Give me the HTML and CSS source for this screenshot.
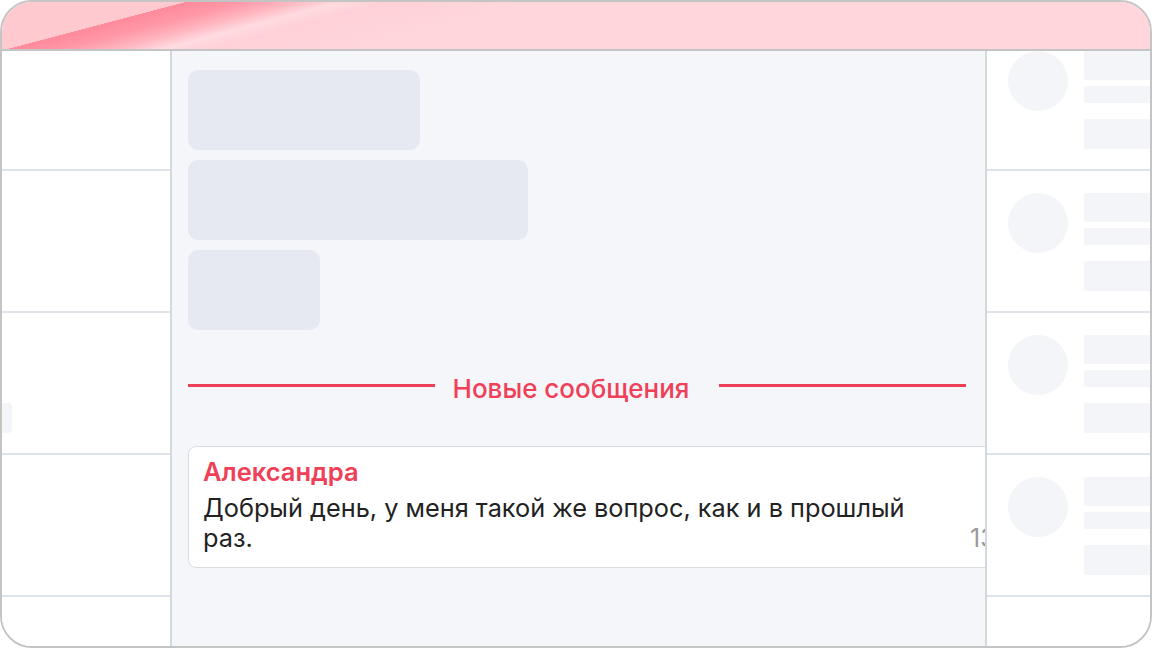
FILE: index.html
```html
<!DOCTYPE html>
<html lang="ru">
<head>
<meta charset="utf-8">
<title>Чат</title>
<link rel="stylesheet" href="styles.css">
</head>
<body>
<div class="frame">
  <div class="topbar"></div>
  <div class="columns">
    <aside class="side side-left">
      <div class="list">
        <div class="row"></div>
        <div class="row"></div>
        <div class="row"><div class="stub"></div></div>
        <div class="row"></div>
        <div class="row"></div>
      </div>
    </aside>
    <main class="chat">
      <div class="skeleton s1"></div>
      <div class="skeleton s2"></div>
      <div class="skeleton s3"></div>
      <div class="divider">
        <span class="divider-line"></span>
        <span class="divider-text">Новые сообщения</span>
        <span class="divider-line"></span>
      </div>
      <div class="message">
        <div class="message-body">
          <div class="message-author">Александра</div>
          <div class="message-text">Добрый день, у меня такой же вопрос, как и в прошлый раз.</div>
        </div>
        <div class="message-time">13:42</div>
      </div>
    </main>
    <aside class="side side-right">
      <div class="list">
        <div class="row item"><div class="avatar"></div><div class="bars"><div class="bar b1"></div><div class="bar b2"></div><div class="bar b3"></div></div></div>
        <div class="row item"><div class="avatar"></div><div class="bars"><div class="bar b1"></div><div class="bar b2"></div><div class="bar b3"></div></div></div>
        <div class="row item"><div class="avatar"></div><div class="bars"><div class="bar b1"></div><div class="bar b2"></div><div class="bar b3"></div></div></div>
        <div class="row item"><div class="avatar"></div><div class="bars"><div class="bar b1"></div><div class="bar b2"></div><div class="bar b3"></div></div></div>
        <div class="row item"></div>
      </div>
    </aside>
  </div>
</div>
</body>
</html>
```
FILE: styles.css
```css
* { box-sizing: border-box; }
html, body { margin: 0; padding: 0; background: #ffffff; }
body {
  width: 1152px;
  height: 648px;
  overflow: hidden;
  font-family: Inter, "Noto Sans", "DejaVu Sans", sans-serif;
}
.frame {
  width: 1152px;
  height: 648px;
  border: 2px solid #c4c4c4;
  border-radius: 32px;
  overflow: hidden;
  display: flex;
  flex-direction: column;
  background: #ffffff;
}
.topbar {
  flex: 0 0 49px;
  border-bottom: 2px solid #c4c4c4;
  background: linear-gradient(165.2deg,
    #ffc9d0 0%, #ffc9d0 13.8%,
    #ff8a9b 13.9%, #ff97a7 18%,
    #ffb6c0 22%, #ffdbe0 25.5%,
    #ffd1d7 29%, #ffd6db 40%, #ffd6db 100%);
}
.columns {
  flex: 1;
  display: flex;
  min-height: 0;
}
.side {
  background: #ffffff;
  overflow: hidden;
}
.side-left {
  flex: 0 0 170px;
  border-right: 2px solid #d0d9de;
}
.side-right {
  flex: 1;
  border-left: 2px solid #d0d9de;
}
.list {
  margin-top: -22px;
}
.row {
  display: flow-root;
  height: 142px;
  border-bottom: 2px solid #dde3e8;
}
.stub {
  margin-top: 90px;
  width: 10px;
  height: 30px;
  background: #f4f5f9;
  border-radius: 0 4px 4px 0;
}
.item {
  display: flex;
  gap: 16px;
  padding: 22px 0 0 21px;
}
.avatar {
  flex: 0 0 60px;
  height: 60px;
  border-radius: 50%;
  background: #f4f5f9;
}
.bars {
  flex: 0 0 160px;
  display: flex;
  flex-direction: column;
}
.bar {
  background: #f4f5f9;
  border-radius: 3px;
}
.b1 { height: 29px; }
.b2 { height: 17px; margin-top: 6px; }
.b3 { height: 30px; margin-top: 16px; }

.chat {
  flex: 0 0 813px;
  background: #f5f6fa;
  overflow: hidden;
  padding: 19px 19px 0 16px;
  display: flex;
  flex-direction: column;
  align-items: flex-start;
}
.skeleton {
  height: 80px;
  border-radius: 10px;
  background: #e6e9f2;
  flex: 0 0 auto;
}
.skeleton + .skeleton { margin-top: 10px; }
.s1 { width: 232px; }
.s2 { width: 340px; }
.s3 { width: 132px; }

.divider {
  align-self: stretch;
  margin-top: 44px;
  display: flex;
  align-items: flex-start;
}
.divider-line {
  flex: 1;
  height: 3px;
  margin-top: 10px;
  background: #ef4058;
}
.divider-text {
  margin: 0 30px 0 18px;
  font-size: 26px;
  line-height: 30px;
  font-weight: 500;
  color: #ef4058;
  white-space: nowrap;
}
.message {
  margin-top: 42px;
  flex: 0 0 auto;
  width: 860px;
  background: #ffffff;
  border: 1px solid #d9dde2;
  border-radius: 8px;
  padding: 10px 15px 14px 14px;
  display: flex;
  align-items: flex-end;
}
.message-body {
  flex: 0 0 730px;
}
.message-author {
  font-size: 25.5px;
  line-height: 30px;
  font-weight: 600;
  color: #ef4058;
  margin-bottom: 6px;
}
.message-text {
  font-size: 25.3px;
  line-height: 30px;
  color: #222222;
}
.message-time {
  margin-left: 37px;
  font-size: 25px;
  line-height: 30px;
  color: #9a9a9a;
  white-space: nowrap;
}
```
